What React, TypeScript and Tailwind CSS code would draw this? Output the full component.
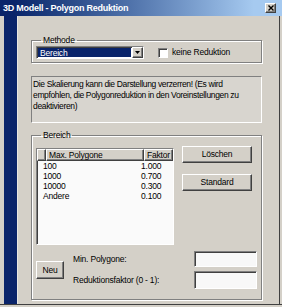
import React from "react";

const raised =
  "bg-[#d4d0c8] border border-t-white border-l-white border-r-[#404040] border-b-[#404040] shadow-[inset_-1px_-1px_0_#808080]";
const sunken =
  "border border-t-[#808080] border-l-[#808080] border-r-white border-b-white shadow-[inset_1px_1px_0_#404040]";
const etched =
  "border border-[#808080] shadow-[1px_1px_0_#fff,inset_1px_1px_0_#fff]";

const rows = [
  { max: "100", f: "1.000" },
  { max: "1000", f: "0.700" },
  { max: "10000", f: "0.300" },
  { max: "Andere", f: "0.100" },
];

const App: React.FC = () => {
  return (
    <div className="w-[282px] h-[307px] bg-[#d4d0c8] overflow-hidden text-[8.5px] tracking-[-0.2px] leading-[11px] text-black font-['Liberation_Sans',Arial,sans-serif]">
      {/* title bar */}
      <div className="h-[16px] flex items-center justify-between pl-[3px] pr-[6px] bg-linear-to-r from-[#0a246a] from-[5%] to-[#a6caf0] to-[90%]">
        <span className="text-white font-bold text-[9px] tracking-[-0.25px]">
          3D Modell - Polygon Reduktion
        </span>
        <div className={`w-[11px] h-[10px] flex items-center justify-center ${raised}`}>
          <svg width="6" height="6" viewBox="0 0 6 6">
            <path d="M0.5 0.5 L5.5 5.5 M5.5 0.5 L0.5 5.5" stroke="#000" strokeWidth="1.4" />
          </svg>
        </div>
      </div>

      <div className="flex h-[289px] border-b border-[#404040]">
        <div className="w-[4px]" />
        <div className="w-[13px] bg-[#0a246a]" />
        <div className="w-[14px] border-l border-[#e8e6e2]" />

        <div className="w-[231px] flex flex-col">
          {/* Methode */}
          <fieldset className={`mt-[18px] h-[29px] pl-[4px] ${etched}`}>
            <legend className="ml-[5px] px-[2px] leading-[12px]">Methode</legend>
            <div className="flex items-center">
              <div className={`w-[108px] h-[13px] flex bg-white ${sunken}`}>
                <div className="flex-1 bg-[#0a246a] text-white pl-[2px] leading-[10px] m-[1px]">
                  Bereich
                </div>
                <div className={`w-[11px] flex items-center justify-center ${raised}`}>
                  <svg width="5" height="3" viewBox="0 0 5 3">
                    <path d="M0 0 H5 L2.5 3 Z" fill="#000" />
                  </svg>
                </div>
              </div>
              <div className={`ml-[14px] w-[10px] h-[10px] bg-white ${sunken}`} />
              <span className="ml-[4px]">keine Reduktion</span>
            </div>
          </fieldset>

          {/* Hinweis */}
          <div className={`mt-[13px] h-[47px] pl-[1px] pt-[2px] whitespace-nowrap tracking-[-0.35px] bg-[#d8d5cf] ${sunken} shadow-none`}>
            Die Skalierung kann die Darstellung verzerren! (Es wird
            <br />
            empfohlen, die Polygonreduktion in den Voreinstellungen zu
            <br />
            deaktivieren)
          </div>

          {/* Bereich */}
          <fieldset className={`mt-[6px] h-[171px] pl-[4px] pt-[5px] ${etched}`}>
            <legend className="ml-[5px] px-[2px] leading-[12px]">Bereich</legend>
            <div className="flex items-start">
              <div className={`mt-[2px] w-[138px] h-[97px] bg-[#fafafa] ${sunken}`}>
                <div className="flex h-[12px] leading-[10px]">
                  <div className={`w-[9px] ${raised}`} />
                  <div className={`w-[98px] pl-[2px] ${raised}`}>Max. Polygone</div>
                  <div className={`flex-1 pl-[2px] ${raised}`}>Faktor</div>
                </div>
                {rows.map((r) => (
                  <div key={r.max} className="flex h-[10px] leading-[10px]">
                    <div className="w-[104px] pl-[6px]">{r.max}</div>
                    <div>{r.f}</div>
                  </div>
                ))}
              </div>
              <div className="ml-[8px] flex flex-col gap-[11px]">
                <div className={`w-[70px] h-[17px] flex items-center justify-center ${raised}`}>Löschen</div>
                <div className={`w-[70px] h-[17px] flex items-center justify-center ${raised}`}>Standard</div>
              </div>
            </div>

            <div className="mt-[6px] flex items-center">
              <div className={`w-[28px] h-[18px] flex items-center justify-center ${raised}`}>Neu</div>
              <div className="ml-[9px] flex flex-col gap-[4px]">
                <div className="flex items-center w-[184px] h-[16px]">
                  <span className="flex-1">Min. Polygone:</span>
                  <div className={`w-[63px] h-[16px] bg-[#f8f8f8] ${sunken}`} />
                </div>
                <div className="flex items-center w-[184px] h-[18px]">
                  <span className="flex-1">Reduktionsfaktor (0 - 1):</span>
                  <div className={`w-[63px] h-[18px] bg-[#f8f8f8] ${sunken}`} />
                </div>
              </div>
            </div>
          </fieldset>
        </div>

        <div className="w-[17px]" />
        <div className="w-[1px] bg-[#404040]" />
      </div>
    </div>
  );
};

export default App;
